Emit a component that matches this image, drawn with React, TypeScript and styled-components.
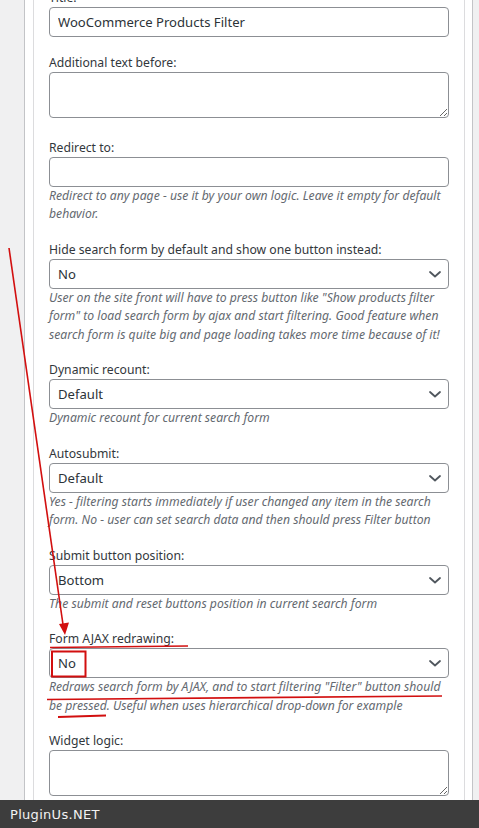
import React from "react";
import styled, { createGlobalStyle } from "styled-components";

const Global = createGlobalStyle`
  html, body {
    margin: 0;
    padding: 0;
    background: #f0f0f1;
    height: 828px;
    overflow: hidden;
  }
  body {
    font-family: "Noto Sans", "Open Sans", sans-serif;
  }
`;

const Page = styled.div`
  position: relative;
  width: 479px;
  height: 828px;
  overflow: hidden;
`;

const Outer = styled.div`
  margin-left: 24px;
  width: 449px;
  box-sizing: border-box;
  height: 828px;
  background: #ffffff;
  border-left: 1px solid #c3c4c7;
  border-right: 1px solid #c3c4c7;
  padding: 0 7px 0 8px;
`;

const Inner = styled.div`
  box-sizing: border-box;
  width: 432px;
  height: 100%;
  border-left: 1px solid #dcdcde;
  border-right: 1px solid #dcdcde;
  padding: 0 15px;
  display: flex;
  flex-direction: column;
  gap: 16px;
`;

const Field = styled.div<{ $first?: boolean }>`
  display: flex;
  flex-direction: column;
  margin-top: ${(p) => (p.$first ? "-12px" : "0")};
`;

const Label = styled.label`
  display: block;
  font-size: 12.2px;
  line-height: 19px;
  height: 19px;
  color: #32373c;
`;

const TextInput = styled.input`
  box-sizing: border-box;
  display: block;
  width: 400px;
  height: 30px;
  margin: 0;
  padding: 0 8px;
  border: 1px solid #8c8f94;
  border-radius: 4px;
  background: #fff;
  font-family: inherit;
  font-size: 13.1px;
  color: #2c3338;
  outline: none;
`;

const TextArea = styled.textarea`
  box-sizing: border-box;
  display: block;
  width: 400px;
  height: 46px;
  margin: 0 0 3.5px;
  padding: 4px 8px;
  border: 1px solid #8c8f94;
  border-radius: 4px;
  background: #fff;
  font-family: inherit;
  font-size: 13.1px;
  color: #2c3338;
  resize: vertical;
  outline: none;
`;

const SelectWrap = styled.div`
  position: relative;
  width: 400px;
  height: 30px;
`;

const Select = styled.select`
  box-sizing: border-box;
  display: block;
  appearance: none;
  -webkit-appearance: none;
  width: 400px;
  height: 30px;
  margin: 0;
  padding: 0 24px 0 8px;
  border: 1px solid #8c8f94;
  border-radius: 4px;
  background: #fff;
  font-family: inherit;
  font-size: 13.1px;
  color: #2c3338;
  outline: none;
`;

const Chevron = styled.svg`
  position: absolute;
  right: 8px;
  top: 12px;
  width: 12px;
  height: 7px;
  pointer-events: none;
`;

const Desc = styled.p`
  margin: 0;
  font-size: 12.2px;
  line-height: 18.5px;
  font-style: italic;
  color: #646970;
`;

const Footer = styled.div`
  position: absolute;
  left: 0;
  right: 0;
  bottom: 0;
  height: 28px;
  background: #3d3d3d;
  display: flex;
  align-items: center;
  padding-left: 10px;
  font-family: "DejaVu Sans", sans-serif;
  font-size: 13px;
  letter-spacing: 0.3px;
  color: #f2f2f2;
`;

const Overlay = styled.svg`
  position: absolute;
  left: 0;
  top: 0;
  width: 479px;
  height: 828px;
  pointer-events: none;
`;

type SelField = { label: string; value: string; options: string[]; desc?: string };

const DropDown: React.FC<{ value: string; options: string[] }> = ({ value, options }) => (
  <SelectWrap>
    <Select defaultValue={value}>
      {options.map((o) => (
        <option key={o} value={o}>
          {o}
        </option>
      ))}
    </Select>
    <Chevron viewBox="0 0 12 7">
      <path d="M1 1 L6 5.5 L11 1" fill="none" stroke="#50575e" strokeWidth="1.8" strokeLinecap="round" strokeLinejoin="round" />
    </Chevron>
  </SelectWrap>
);

const selects: SelField[] = [
  {
    label: "Hide search form by default and show one button instead:",
    value: "No",
    options: ["No", "Yes"],
    desc:
      'User on the site front will have to press button like "Show products filter form" to load search form by ajax and start filtering. Good feature when search form is quite big and page loading takes more time because of it!',
  },
  {
    label: "Dynamic recount:",
    value: "Default",
    options: ["Default", "Yes", "No"],
    desc: "Dynamic recount for current search form",
  },
  {
    label: "Autosubmit:",
    value: "Default",
    options: ["Default", "Yes", "No"],
    desc: "Yes - filtering starts immediately if user changed any item in the search form. No - user can set search data and then should press Filter button",
  },
  {
    label: "Submit button position:",
    value: "Bottom",
    options: ["Bottom", "Top", "Top and bottom"],
    desc: "The submit and reset buttons position in current search form",
  },
  {
    label: "Form AJAX redrawing:",
    value: "No",
    options: ["No", "Yes"],
    desc: 'Redraws search form by AJAX, and to start filtering "Filter" button should be pressed. Useful when uses hierarchical drop-down for example',
  },
];

const RED = "#d20f0f";

export default function App() {
  return (
    <Page>
      <Global />
      <Outer>
        <Inner>
          <Field $first>
            <Label>Title:</Label>
            <TextInput defaultValue="WooCommerce Products Filter" />
          </Field>
          <Field>
            <Label>Additional text before:</Label>
            <TextArea />
          </Field>
          <Field>
            <Label>Redirect to:</Label>
            <TextInput defaultValue="" />
            <Desc>Redirect to any page - use it by your own logic. Leave it empty for default behavior.</Desc>
          </Field>
          {selects.map((s) => (
            <Field key={s.label}>
              <Label>{s.label}</Label>
              <DropDown value={s.value} options={s.options} />
              {s.desc && <Desc>{s.desc}</Desc>}
            </Field>
          ))}
          <Field>
            <Label>Widget logic:</Label>
            <TextArea />
          </Field>
        </Inner>
      </Outer>
      <Overlay viewBox="0 0 479 828">
        <line x1="9" y1="248" x2="63.5" y2="628" stroke={RED} strokeWidth="1.6" />
        <polygon points="59,624 69,622.5 65,635" fill={RED} />
        <line x1="50" y1="647.5" x2="188" y2="646" stroke={RED} strokeWidth="1.6" />
        <rect x="52" y="651.5" width="33.5" height="25" fill="none" stroke={RED} strokeWidth="2" />
        <line x1="47" y1="699.5" x2="442" y2="696" stroke={RED} strokeWidth="1.6" />
        <line x1="58" y1="717" x2="106" y2="715.5" stroke={RED} strokeWidth="2" />
      </Overlay>
      <Footer>PluginUs.NET</Footer>
    </Page>
  );
}
